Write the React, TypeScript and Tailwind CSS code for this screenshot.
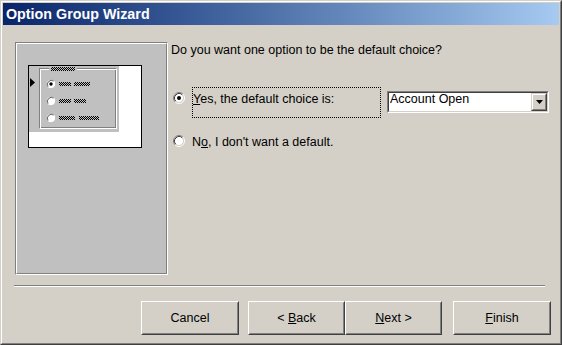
import React from "react";

function Radio({ checked }: { checked?: boolean }) {
  return (
    <svg width="12" height="12" viewBox="0 0 12 12" className="block shrink-0">
      <circle cx="6" cy="6" r="4.5" fill="#fff" />
      <path d="M2.11 9.89A5.5 5.5 0 0 1 9.89 2.11" fill="none" stroke="#808080" />
      <path d="M9.89 2.11A5.5 5.5 0 0 1 2.11 9.89" fill="none" stroke="#fff" />
      <path d="M2.82 9.18A4.5 4.5 0 0 1 9.18 2.82" fill="none" stroke="#404040" />
      <path d="M9.18 2.82A4.5 4.5 0 0 1 2.82 9.18" fill="none" stroke="#d4d0c8" />
      {checked && <circle cx="6" cy="6" r="2" fill="#000" />}
    </svg>
  );
}

function MiniRadio({ cy, checked }: { cy: number; checked?: boolean }) {
  return (
    <g>
      <circle cx="23" cy={cy} r="4" fill="#fff" />
      <path d={`M20.2 ${cy + 2.8}A4 4 0 0 1 25.8 ${cy - 2.8}`} fill="none" stroke="#606060" />
      <path d={`M25.8 ${cy - 2.8}A4 4 0 0 1 20.2 ${cy + 2.8}`} fill="none" stroke="#fff" />
      {checked && <circle cx="23" cy={cy} r="1.7" fill="#000" />}
    </g>
  );
}

function MiniPreview() {
  return (
    <svg width="114" height="83" viewBox="0 0 114 83" className="block">
      <defs>
        <pattern id="dots" width="2" height="2" patternUnits="userSpaceOnUse">
          <rect x="0" y="0" width="1" height="1" fill="#000" shapeRendering="crispEdges" />
          <rect x="1" y="1" width="1" height="1" fill="#000" shapeRendering="crispEdges" />
        </pattern>
      </defs>
      <g shapeRendering="crispEdges">
        <rect x="0" y="0" width="114" height="83" fill="#000" />
        <rect x="1" y="1" width="112" height="81" fill="#fff" />
        <rect x="1" y="1" width="90" height="66" fill="#c0c0c0" />
        <rect x="11.5" y="3.5" width="76" height="59" fill="none" stroke="#808080" />
        <rect x="12.5" y="4.5" width="76" height="59" fill="none" stroke="#fff" />
        <rect x="21" y="1" width="28" height="6" fill="#c0c0c0" />
        <rect x="23" y="2" width="24" height="4" fill="url(#dots)" />
        <rect x="31" y="17" width="12" height="4" fill="url(#dots)" />
        <rect x="46" y="17" width="16" height="4" fill="url(#dots)" />
        <rect x="31" y="34" width="12" height="4" fill="url(#dots)" />
        <rect x="46" y="34" width="12" height="4" fill="url(#dots)" />
        <rect x="31" y="51" width="16" height="4" fill="url(#dots)" />
        <rect x="51" y="51" width="20" height="4" fill="url(#dots)" />
      </g>
      <polygon points="2,13 7,17.5 2,22" fill="#000" />
      <MiniRadio cy={19} checked />
      <MiniRadio cy={36} />
      <MiniRadio cy={53} />
    </svg>
  );
}

function Btn({ children, w }: { children: React.ReactNode; w: string }) {
  return (
    <div
      className={`${w} h-[34px] shrink-0 border border-t-white border-l-white border-r-[#404040] border-b-[#404040]`}
    >
      <div className="w-full h-full border border-t-[#d4d0c8] border-l-[#d4d0c8] border-r-[#808080] border-b-[#808080] flex items-center justify-center">
        <span>{children}</span>
      </div>
    </div>
  );
}

export default function App() {
  return (
    <div className="w-[562px] h-[345px] border border-t-[#d4d0c8] border-l-[#d4d0c8] border-r-[#404040] border-b-[#404040] bg-[#d4d0c8] font-['Liberation_Sans',Arial,sans-serif] text-[12.5px] leading-[16px] text-black">
      <div className="h-full border border-t-white border-l-white border-r-[#808080] border-b-[#808080] p-px flex flex-col">
        <div className="h-[22px] shrink-0 bg-gradient-to-r from-[#0a246a] to-[#a6caf0] flex items-center pl-[3px] text-white font-bold text-[14.3px]">
          Option Group Wizard
        </div>

        <div className="flex pl-[12px] pt-[17px]">
          <div className="w-[153px] h-[233px] shrink-0 border border-t-[#808080] border-l-[#808080] border-r-white border-b-white">
            <div className="w-full h-full border border-t-white border-l-white border-r-[#808080] border-b-[#808080] bg-[#c0c0c0] pl-[11px] pt-[21px]">
              <MiniPreview />
            </div>
          </div>

          <div className="ml-[3px] flex flex-col">
            <div>Do you want one option to be the default choice?</div>

            <div className="flex items-start mt-[29px]">
              <div className="ml-[2px] mt-[5px]">
                <Radio checked />
              </div>
              <div className="ml-[7px] w-[189px] h-[31px] border border-dotted border-black pt-[3px]">
                <span className="underline">Y</span>es, the default choice is:
              </div>
              <div className="ml-[6px] mt-[4px] w-[162px] h-[22px] border border-t-[#808080] border-l-[#808080] border-r-white border-b-white">
                <div className="w-full h-full border border-t-[#404040] border-l-[#404040] border-r-[#d4d0c8] border-b-[#d4d0c8] bg-white flex">
                  <div className="flex-1 pl-[1px] leading-[13px]">Account Open</div>
                  <div className="w-[16px] h-full border border-t-[#d4d0c8] border-l-[#d4d0c8] border-r-[#404040] border-b-[#404040]">
                    <div className="w-full h-full border border-t-white border-l-white border-r-[#808080] border-b-[#808080] bg-[#d4d0c8] flex items-center justify-center">
                      <svg width="7" height="4" viewBox="0 0 7 4" className="block">
                        <polygon points="0,0 7,0 3.5,4" fill="#000" />
                      </svg>
                    </div>
                  </div>
                </div>
              </div>
            </div>

            <div className="flex items-start mt-[16px]">
              <div className="ml-[2px] mt-[1px]">
                <Radio />
              </div>
              <div className="ml-[7px]">
                N<span className="underline">o</span>, I don't want a default.
              </div>
            </div>
          </div>
        </div>

        <div className="ml-[11px] mt-[10px] w-[531px] h-[2px] border-t border-t-[#808080] border-b border-b-white" />

        <div className="flex mt-[14px] ml-[138px]">
          <Btn w="w-[98px]">Cancel</Btn>
          <div className="ml-[9px] flex">
            <Btn w="w-[97px]">
              &lt; <span className="underline">B</span>ack
            </Btn>
            <Btn w="w-[97px]">
              <span className="underline">N</span>ext &gt;
            </Btn>
          </div>
          <div className="ml-[11px]">
            <Btn w="w-[98px]">
              <span className="underline">F</span>inish
            </Btn>
          </div>
        </div>
      </div>
    </div>
  );
}
